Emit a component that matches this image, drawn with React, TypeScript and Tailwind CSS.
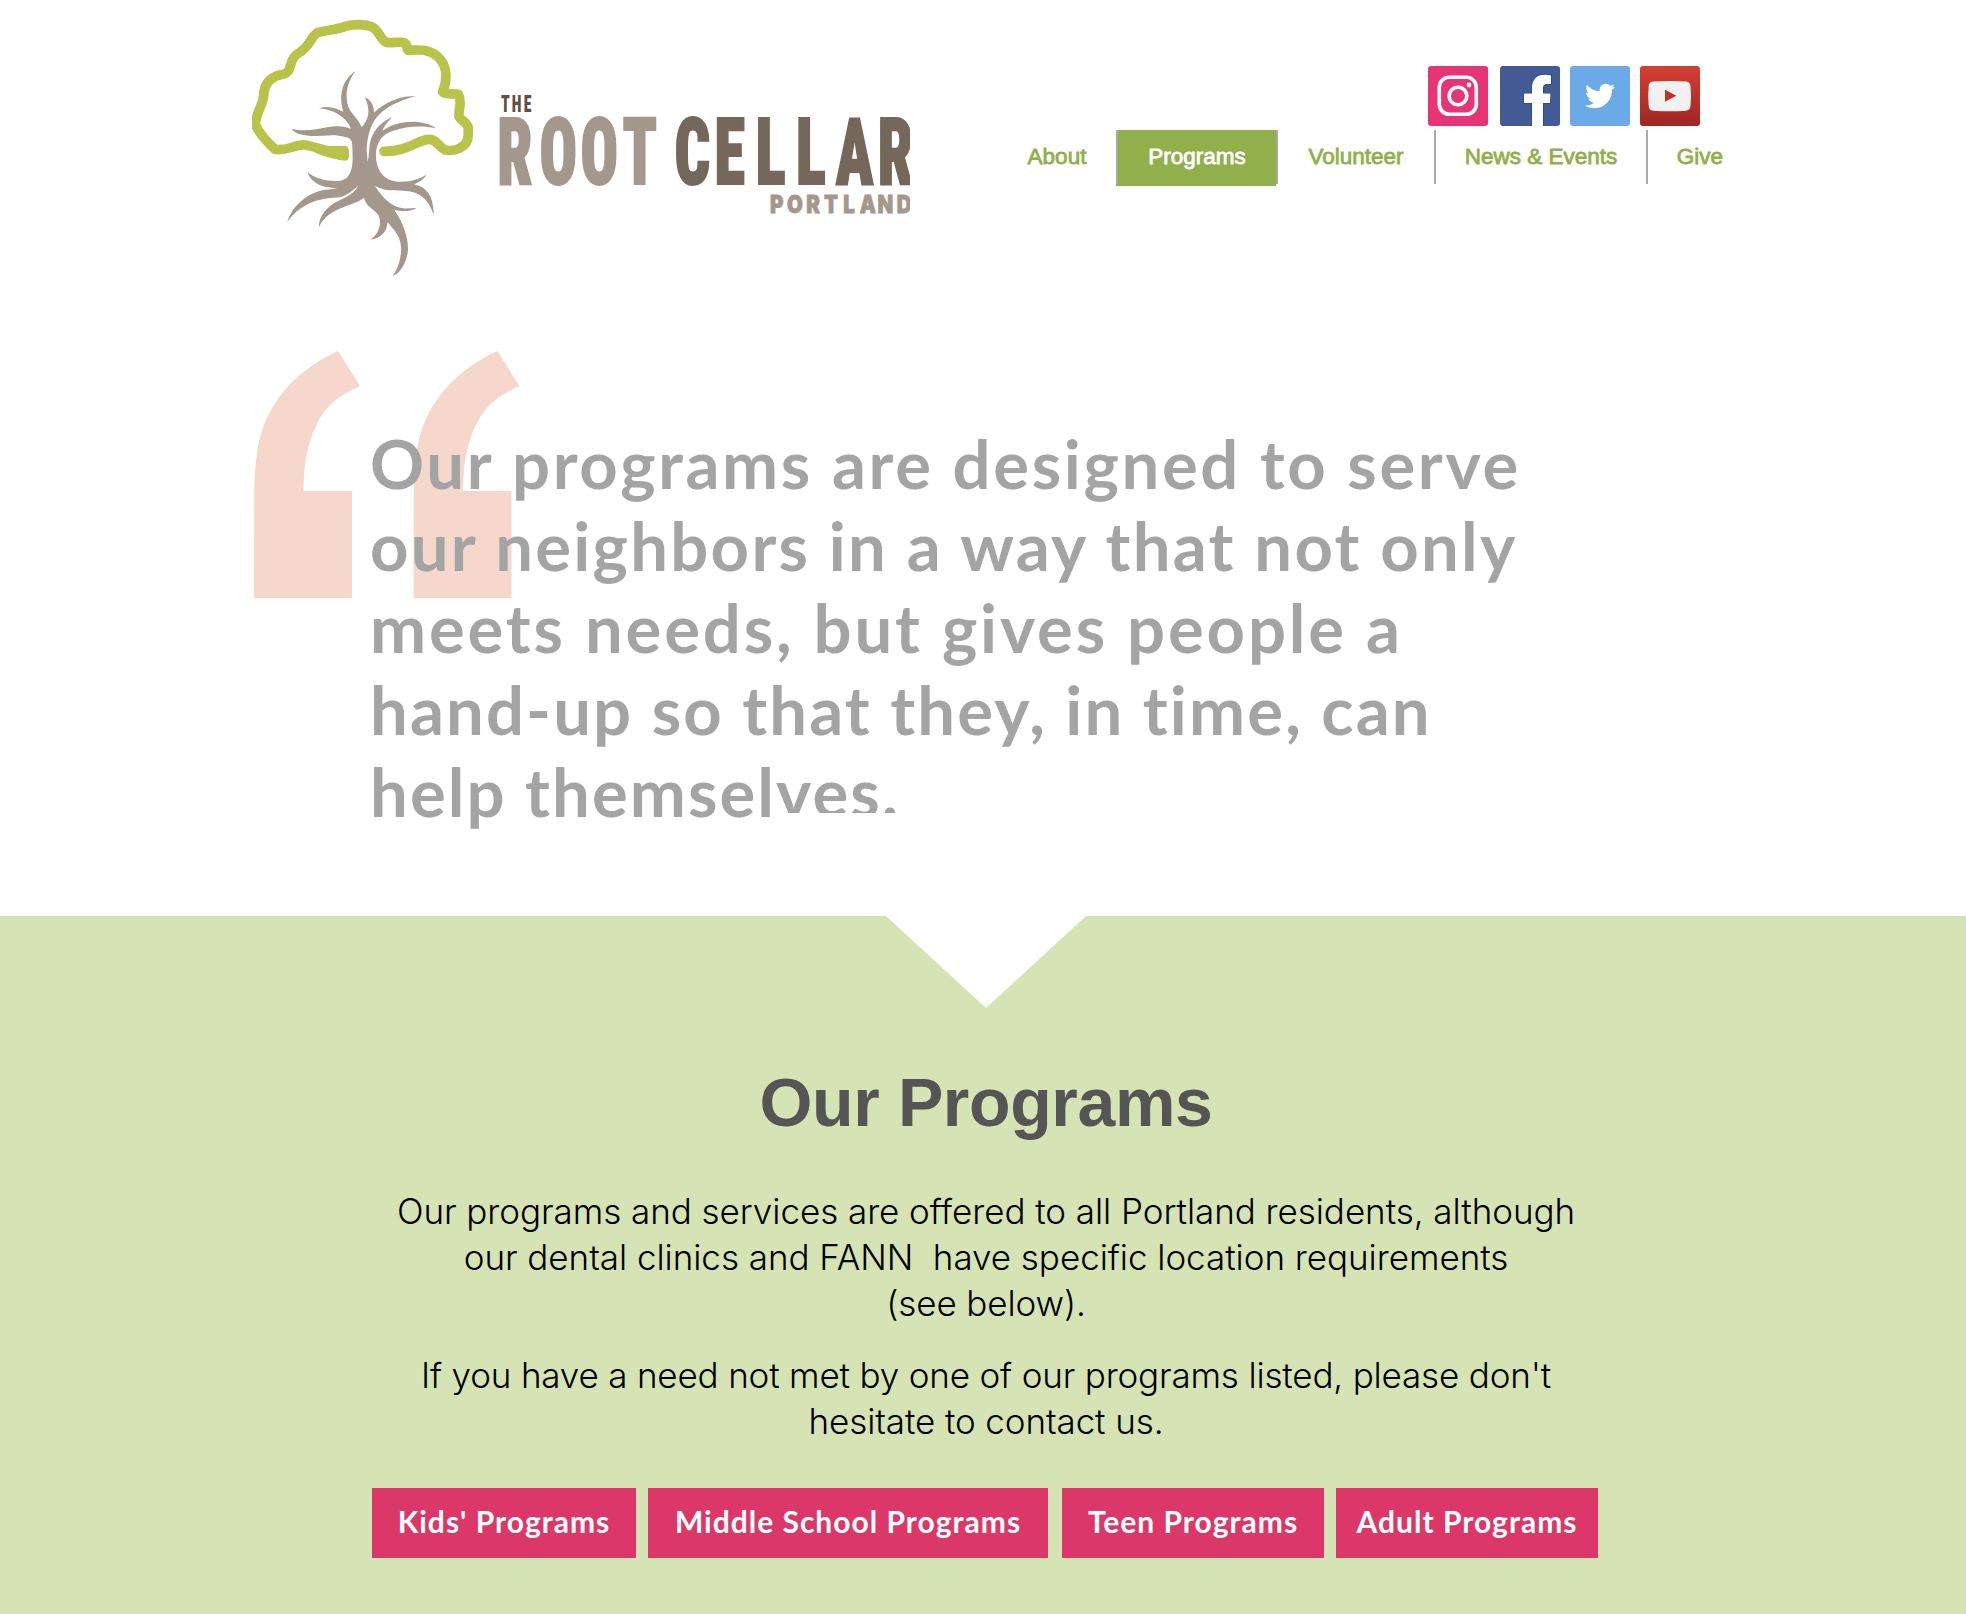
import type { ReactNode } from "react";
import { FaTwitter } from "react-icons/fa";

function Logo() {
  return (
    <svg className="h-[280px] w-[658px] shrink-0" viewBox="252 10 658 280" role="img" aria-label="The Root Cellar Portland">
      <g transform="translate(240 10) scale(.33333)">
        <path
          d="M312 430C270 430 235 412 195 405C165 402 140 425 105 418C85 400 62 375 46 345C46 310 72 285 72 245C76 215 100 197 128 193C160 187 143 150 172 132C215 105 208 85 232 68C260 60 290 60 320 48C350 42 380 44 395 50C420 62 420 90 440 97C465 100 490 92 498 102C503 110 498 122 508 121C530 120 560 115 590 137C625 165 622 210 608 245C615 255 635 250 655 253C668 275 655 295 657 320C665 335 682 335 685 355C684 375 688 390 672 406C655 420 640 424 615 420C595 410 590 386 565 388C530 392 500 425 432 424"
          fill="none"
          stroke="#b9c349"
          strokeWidth="29"
          strokeLinecap="round"
          strokeLinejoin="round"
        />
        <path d="M232 404Q250 409 268 408H316Q326 408 327 425Q328 452 318 452Q280 450 225 428Z" fill="#b9c349" />
        <path
          d="M337 405Q336 385 320 382C285 370 250 378 215 378C190 376 165 372 155 357C190 365 220 360 260 352C290 346 315 348 333 356C318 320 280 298 237 295C265 285 290 295 310 305C295 260 305 210 347 183C318 220 315 260 325 290C335 315 355 325 365 352C382 330 395 310 375 262C395 270 402 290 402 308C430 280 480 255 527 259C480 270 430 295 408 325C390 350 382 380 380 420L383 455C388 440 386 420 390 400C395 370 415 340 456 321C445 335 430 350 428 362C470 330 550 325 588 355C540 345 500 350 460 362C425 372 406 400 408 440C410 490 440 515 480 515C520 515 540 505 560 494C550 510 530 520 521 523C560 530 582 560 581 616C575 595 560 560 525 548C490 535 440 550 405 527C430 570 460 590 485 594C500 597 515 595 530 593C515 605 485 606 463 599C490 640 505 680 504 720C500 760 480 790 458 798C475 775 485 740 483 710C480 670 455 655 443 636C440 670 420 685 390 689C415 675 428 640 415 615C400 595 378 590 372 563C340 590 265 590 237 651C235 620 260 590 290 575C320 560 345 550 354 527C335 545 320 555 300 562C250 565 190 570 142 636C155 590 200 550 250 540C270 538 285 536 292 534C260 535 215 525 203 487C225 505 260 515 295 513C330 510 338 480 338 440Z"
          fill="#a4978b"
        />
      </g>
      <g className="font-['Roboto'] font-black [font-stretch:75%]" strokeWidth="2">
        <text transform="translate(0 112) scale(.66 1)" y="0" x="759 775.5 793.5" fontSize="24" fill="#5f4f44">THE</text>
        <text transform="translate(0 184) scale(.67 1)" y="0" x="742 805.2 866.4 929" fontSize="93" fill="#a4978b" stroke="#a4978b">ROOT</text>
        <text transform="translate(0 184) scale(.67 1)" y="0" x="1006.7 1066.6 1127.8 1188.2 1247.5 1309.9" fontSize="93" fill="#75675a" stroke="#75675a">CELLAR</text>
      </g>
      <text
        transform="translate(0 212.5) scale(.85 1)"
        y="0"
        x="906 926 948.5 969.5 992 1011.5 1032.5 1055"
        fontSize="24"
        fill="#a4978b"
        stroke="#a4978b"
        strokeWidth=".8"
        className="font-['Inter'] font-black"
      >
        PORTLAND
      </text>
    </svg>
  );
}

function Instagram() {
  return (
    <svg viewBox="0 0 60 60" className="size-15 rounded-[3px] bg-[#e73475]" fill="none" stroke="#fff" strokeWidth="3.6">
      <rect x="11.3" y="11.3" width="37" height="37" rx="10" />
      <circle cx="30" cy="30" r="8.8" />
      <circle cx="41" cy="19" r="2.4" fill="#fff" stroke="none" />
    </svg>
  );
}

function Facebook() {
  return (
    <svg viewBox="0 0 60 60" className="size-15 rounded-[3px] bg-[#435b95]">
      <path
        d="M32 61V37H24V27.5H32V22C32 13 37 8.7 45 8.7Q49 8.7 51 9.5V18H47.5C44 18 43 19.5 43 22.5V27.5H50.5L50 37H43V61Z"
        fill="#fff"
        stroke="#2c4682"
        strokeWidth="1.6"
        paintOrder="stroke"
      />
    </svg>
  );
}

function Youtube() {
  return (
    <svg viewBox="0 0 60 60" className="size-15 rounded-[3px] bg-linear-to-b from-[#d63f33] to-[#9f2622]">
      <path d="M13 15.6Q30 14.6 46 15.6Q50 16 50.5 20Q51.5 30 50.5 40Q50 44.5 46 44.7Q30 45.7 13 44.7Q9 44.5 8.7 40Q7.7 30 8.7 20Q9 16 13 15.6Z" fill="#f1f1f1" />
      <path d="M25 23.7L36.3 29.7L25 35.7Z" fill="#bf3029" />
    </svg>
  );
}

function Separator() {
  return <span className="h-[54px] w-0.5 bg-[#a9a9a9]" />;
}

function NavItem({ className, children }: { className: string; children: ReactNode }) {
  return (
    <a className={`h-[54px] text-center text-[22.5px] leading-[54px] [-webkit-text-stroke:0.8px] ${className}`}>{children}</a>
  );
}

function Header() {
  return (
    <header className="flex h-[290px] items-start pt-2.5 pl-[252px] font-['Liberation_Sans',sans-serif]">
      <Logo />
      <div className="ml-[88px] flex flex-col gap-1 pt-14">
        <div className="flex gap-2.5 pl-[430px]">
          <Instagram />
          <div className="ml-0.5">
            <Facebook />
          </div>
          <div className="flex size-15 items-center justify-center rounded-[3px] bg-[#6aaae7]">
            <FaTwitter className="size-[30px] text-white" />
          </div>
          <Youtube />
        </div>
        <nav className="flex text-[#91af4b]">
          <NavItem className="w-[118px]">About</NavItem>
          <div className="flex h-14 w-40 bg-[#91af4b]">
            <Separator />
            <NavItem className="w-[158px] text-white">Programs</NavItem>
          </div>
          <Separator />
          <NavItem className="w-[156px]">Volunteer</NavItem>
          <Separator />
          <NavItem className="w-[210px]">News &amp; Events</NavItem>
          <Separator />
          <NavItem className="w-[104px]">Give</NavItem>
        </nav>
      </div>
    </header>
  );
}

function QuoteMark() {
  const d = "M0 247L.3 140C1 105 5 80 16 61C30 35 52 15 84 0L106 35C84 45 72 55 64 71C54 90 50 110 49.5 140H98V247Z";
  return (
    <svg viewBox="0 0 266 247" className="absolute top-[61px] left-[254px] h-[247px] w-[266px]" fill="#f5d7cb">
      <path d={d} />
      <path d={d} transform="translate(159.5)" />
    </svg>
  );
}

function Quote() {
  return (
    <section className="relative h-[626px] pt-[132px] pl-[370px]">
      <QuoteMark />
      <p className="relative text-[67px] leading-[82px] font-bold whitespace-nowrap text-[#a4a4a4] font-['Lato',sans-serif]">
        <span className="block tracking-[2.65px]">Our programs are designed to serve</span>
        <span className="block tracking-[2.27px]">our neighbors in a way that not only</span>
        <span className="block tracking-[2.83px]">meets needs, but gives people a</span>
        <span className="block tracking-[2.12px]">hand-up so that they, in time, can</span>
        <span className="block tracking-[2.09px]">help themselves.</span>
      </p>
      <div className="absolute top-[523px] left-[774px] h-[103px] w-[424px] bg-white" />
    </section>
  );
}

function ProgramButton({ className, children }: { className: string; children: ReactNode }) {
  return (
    <a className={`flex h-[70px] items-center justify-center bg-[#db3768] pb-1 text-[30px] font-bold tracking-[1px] whitespace-nowrap text-white font-['Lato',sans-serif] ${className}`}>
      {children}
    </a>
  );
}

function Programs() {
  return (
    <section className="relative flex h-[698px] flex-col bg-[#d6e3b5] pr-[368px] pl-[372px]">
      <div className="absolute top-0 left-[886px] h-[92px] w-[200px] bg-white [clip-path:polygon(0_0,100%_0,50%_100%)]" />
      <h1 className="mt-[146px] pl-0.5 text-center text-[68px] leading-[80px] font-bold tracking-[-0.36px] text-[#555] font-['Liberation_Sans',sans-serif]">
        Our Programs
      </h1>
      <div className="mt-[46px] flex flex-col gap-[26px] pl-0.5 text-center text-[35px] leading-[46px] font-light whitespace-nowrap text-black font-['Inter',sans-serif]">
        <p>
          <span className="block tracking-[-0.05px]">Our programs and services are offered to all Portland residents, although</span>
          <span className="block tracking-[-0.04px]">our dental clinics and FANN&nbsp; have specific location requirements</span>
          <span className="block tracking-[-0.1px]">(see below).</span>
        </p>
        <p>
          <span className="block tracking-[-0.17px]">If you have a need not met by one of our programs listed, please don't</span>
          <span className="block tracking-[-0.1px]">hesitate to contact us.</span>
        </p>
      </div>
      <div className="mt-11 flex">
        <ProgramButton className="w-[264px]">Kids' Programs</ProgramButton>
        <ProgramButton className="ml-3 w-[400px]">Middle School Programs</ProgramButton>
        <ProgramButton className="ml-3.5 w-[262px]">Teen Programs</ProgramButton>
        <ProgramButton className="ml-3 w-[262px]">Adult Programs</ProgramButton>
      </div>
    </section>
  );
}

export default function App() {
  return (
    <main className="h-[1614px] w-[1966px] overflow-hidden bg-white">
      <Header />
      <Quote />
      <Programs />
    </main>
  );
}
